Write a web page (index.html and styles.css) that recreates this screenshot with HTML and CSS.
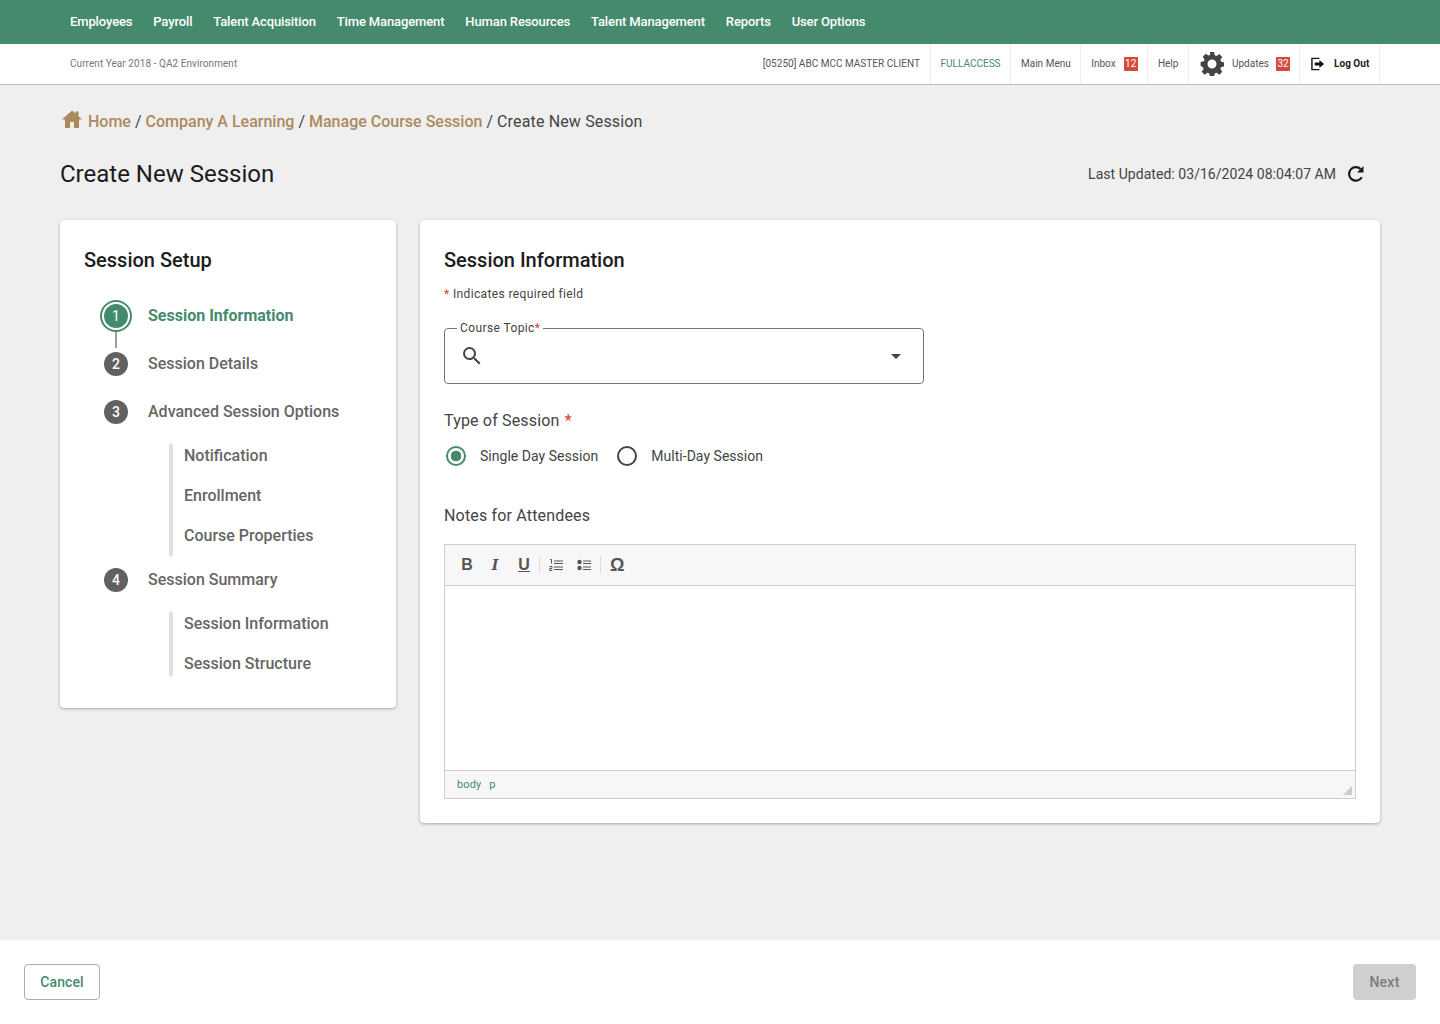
FILE: index.html
```html
<!DOCTYPE html>
<html lang="en">
<head>
<meta charset="utf-8">
<title>Create New Session</title>
<link rel="stylesheet" href="styles.css">
</head>
<body>
<div class="page">
  <nav class="topnav">
    <a>Employees</a><a>Payroll</a><a>Talent Acquisition</a><a>Time Management</a><a>Human Resources</a><a>Talent Management</a><a>Reports</a><a>User Options</a>
  </nav>
  <div class="subbar">
    <span class="env">Current Year 2018 - QA2 Environment</span>
    <div class="subitems">
      <div class="subitem">[05250] ABC MCC MASTER CLIENT</div>
      <div class="subitem green">FULLACCESS</div>
      <div class="subitem">Main Menu</div>
      <div class="subitem">Inbox <span class="badge">12</span></div>
      <div class="subitem help">Help</div>
      <div class="subitem gearitem">
        <svg class="gear" width="24" height="24" viewBox="0 0 24 24"><path fill="#444" fill-rule="evenodd" d="M9.900 0h4.200l.6 3.200 1.900.8 2.700-1.900 3 3-1.900 2.700.8 1.900 3.200.6v4.200l-3.200.6-.8 1.900 1.900 2.700-3 3-2.700-1.900-1.900.8-.6 3.200H9.900l-.6-3.200-1.900-.8-2.700 1.900-3-3 1.900-2.700-.8-1.900L.6 14.100V9.900l3.200-.6.800-1.900-1.900-2.700 3-3 2.700 1.900 1.900-.8zM12 7.500a4.500 4.500 0 1 0 0 9 4.500 4.500 0 0 0 0-9z"/></svg>
        Updates <span class="badge">32</span>
      </div>
      <div class="subitem logout">
        <svg width="14" height="14" viewBox="0 0 15 14"><path fill="none" stroke="#111" stroke-width="1.500" d="M9 1H1v12h8"/><path fill="#111" d="M4 5.500h5V2.800L14 7l-5 4.200V8.500H4z"/></svg>
        Log Out
      </div>
    </div>
  </div>

  <main class="main">
    <div class="crumbs">
      <svg class="home" width="20" height="18" viewBox="0 0 20 18"><path fill="#ab8a5c" d="M10 .5 0 9.500h3V18h5v-6h4v6h5V9.500h3l-3.500-3.200V1.500h-3v2.100z"/></svg>
      <a>Home</a><i>/</i><a>Company A Learning</a><i>/</i><a>Manage Course Session</a><i>/</i><span>Create New Session</span>
    </div>
    <div class="headrow">
      <h1>Create New Session</h1>
      <div class="updated">
        <span>Last Updated: 03/16/2024 08:04:07 AM</span>
        <svg width="20" height="20" viewBox="0 0 20 20"><path fill="none" stroke="#1a1a1a" stroke-width="2.200" d="M15.800 13.200A6.800 6.800 0 1 1 14.600 5"/><path fill="#1a1a1a" d="M17.500 2v6.500H11z"/></svg>
      </div>
    </div>

    <div class="columns">
      <aside class="card setup">
        <h2>Session Setup</h2>
        <ol class="steps">
          <li class="step active"><span class="ring"><span class="num">1</span></span><span class="label">Session Information</span></li>
          <li class="step"><span class="num">2</span><span class="label">Session Details</span></li>
          <li class="step"><span class="num">3</span><span class="label">Advanced Session Options</span></li>
          <li class="subs"><div>Notification</div><div>Enrollment</div><div>Course Properties</div></li>
          <li class="step"><span class="num">4</span><span class="label">Session Summary</span></li>
          <li class="subs"><div>Session Information</div><div>Session Structure</div></li>
        </ol>
      </aside>

      <section class="card info">
        <h2>Session Information</h2>
        <p class="req"><b>*</b> Indicates required field</p>
        <div class="combo">
          <span class="legend">Course Topic<b>*</b></span>
          <svg width="24" height="24" viewBox="0 0 24 24"><path fill="#444" d="M15.500 14h-.79l-.28-.27A6.470 6.470 0 0 0 16 9.500 6.500 6.500 0 1 0 9.500 16c1.610 0 3.090-.59 4.230-1.570l.27.28v.79l5 4.990L20.490 19l-4.990-5zm-6 0C7.010 14 5 11.990 5 9.500S7.010 5 9.500 5 14 7.010 14 9.500 11.990 14 9.500 14z"/></svg>
          <span class="caret"></span>
        </div>
        <div class="fieldlabel type">Type of Session <b>*</b></div>
        <div class="radios">
          <span class="radio on"></span><span class="rlabel">Single Day Session</span>
          <span class="radio"></span><span class="rlabel">Multi-Day Session</span>
        </div>
        <div class="fieldlabel notes">Notes for Attendees</div>
        <div class="editor">
          <div class="toolbar">
            <span class="tool bold">B</span>
            <span class="tool ital">I</span>
            <span class="tool under">U</span>
            <span class="sep"></span>
            <svg class="lst" width="14" height="12" viewBox="0 0 14 12"><path fill="none" stroke="#555" d="M5 2h9M5 4.500h9M5 8h9M5 10.500h9"/><path fill="none" stroke="#555" d="M1 .5h1.500v4M.5 7.500h2.500v2H.8v2h2.500"/></svg>
            <svg class="bul" width="14" height="12" viewBox="0 0 14 12"><circle cx="2.500" cy="3" r="2.200" fill="#555"/><circle cx="2.500" cy="9" r="2.200" fill="#555"/><path fill="none" stroke="#555" d="M6 2h8M6 4.500h8M6 8h8M6 10.500h8"/></svg>
            <span class="sep sep2"></span>
            <span class="tool omega">Ω</span>
          </div>
          <div class="editarea"></div>
          <div class="statusbar"><span>body</span><span>p</span><em class="grip"></em></div>
        </div>
      </section>
    </div>
  </main>

  <footer class="footer">
    <button class="btn cancel">Cancel</button>
    <button class="btn next">Next</button>
  </footer>
</div>
</body>
</html>
```
FILE: styles.css
```css
* { box-sizing: border-box; }
html, body { margin: 0; padding: 0; }
body { font-family: Roboto, "Liberation Sans", sans-serif; background: #efefef; color: #333; }
.page { height: 1024px; display: flex; flex-direction: column; }

.topnav { height: 44px; padding-bottom: 1px; background: #468a6d; display: flex; align-items: center; padding-left: 60px; flex: none; }
.topnav a { color: #fff; font-size: 13px; font-weight: 500; letter-spacing: -.12px; padding: 0 10.450px; }
.topnav a:first-child { padding-left: 10px; }

.subbar { height: 41px; background: #fff; border-bottom: 1px solid #bdbdbd; display: flex; justify-content: space-between; padding: 0 60px 0 70px; flex: none; font-size: 10px; letter-spacing: .02px; color: #555; }
.env { align-self: center; padding-bottom: 1px; color: #777; letter-spacing: .06px; }
.subitems { display: flex; }
.subitem { display: flex; align-items: center; padding: 0 9.700px 1px; border-right: 1px solid #eee; white-space: nowrap; }
.subitem.green { color: #468a6d; }
.badge { background: #d44a3a; color: #fff; border-radius: 1px; width: 14px; height: 14px; display: inline-flex; align-items: center; justify-content: center; margin-left: 8px; font-size: 10px; }
.help { padding: 0 9.500px 1px; }
.gearitem { padding: 0 9px 1px 11px; }
.gearitem .badge { margin-left: 7px; }
.gear { margin-right: 8px; }
.logout { font-weight: 700; color: #222; padding-left: 11px; }
.logout svg { margin-right: 9px; }

.main { flex: 1; padding: 0 60px; }
.crumbs { display: flex; align-items: center; height: 22px; margin: 25px 0 0 2px; font-size: 16px; color: #444; }
.crumbs span { letter-spacing: .15px; }
.crumbs a { color: #ab8a5c; font-weight: 500; letter-spacing: 0; }
.crumbs i { font-style: normal; margin: 0 4px; }
.home { margin: -4px 6px 0 0; }
.headrow { display: flex; justify-content: space-between; align-items: center; height: 30px; margin-top: 27px; }
h1 { margin: 0; font-size: 24px; font-weight: 400; color: #1c1c1c; }
.updated { display: flex; align-items: center; gap: 10px; font-size: 14px; letter-spacing: .04px; margin-right: 14px; color: #444; }

.columns { display: flex; gap: 24px; align-items: flex-start; margin-top: 31px; }
.card { background: #fff; border-radius: 4px; box-shadow: 0 1px 3px rgba(0,0,0,.3); padding: 24px; }
.card h2 { margin: 0; font-size: 20px; line-height: 32px; font-weight: 500; color: #1c1c1c; }
.setup { width: 336px; height: 488px; flex: none; }
.info { flex: 1; height: 603px; }

.steps { list-style: none; margin: 16px 0 0; padding: 0; }
.step { display: flex; align-items: center; height: 48px; padding-left: 20px; position: relative; font-size: 16px; color: #666; font-weight: 500; }
.num { width: 24px; height: 24px; flex: none; border-radius: 50%; background: #616161; color: #fff; font-size: 14px; font-weight: 500; display: flex; align-items: center; justify-content: center; }
.label { margin-left: 20px; padding-bottom: 2px; }
.step.active { color: #468a6d; font-weight: 700; font-size: 16px; }
.ring { width: 32px; height: 32px; margin-left: -4px; margin-right: -4px; flex: none; border-radius: 50%; border: 2px solid #468a6d; display: flex; align-items: center; justify-content: center; position: relative; }
.ring .num { background: #468a6d; font-weight: 400; }
.ring::after { content: ""; position: absolute; left: 13px; top: 30px; width: 2px; height: 16px; background: #9e9e9e; }
.subs { margin: 8px 0 0 85px; padding: 0 0 8px 11px; border-left: 4px solid #e0e0e0; font-size: 16px; color: #666; font-weight: 500; display: flex; flex-direction: column; gap: 16px; }
.subs:last-child { padding-bottom: 0; }
.subs div { height: 24px; line-height: 24px; }

.req { margin: 10px 0 0; font-size: 12px; line-height: 16px; letter-spacing: .37px; color: #444; }
.req b, .legend b, .fieldlabel b { color: #d33c2c; font-weight: 400; }
.combo { position: relative; width: 480px; height: 56px; margin-top: 26px; border: 1px solid #757575; border-radius: 4px; display: flex; align-items: center; padding-left: 15px; }
.legend { position: absolute; left: 12px; top: -9px; padding: 0 3px; background: #fff; font-size: 12px; line-height: 16px; letter-spacing: .4px; color: #444; }
.caret { position: absolute; right: 22px; top: 25px; border: 5px solid transparent; border-top-color: #444; border-bottom: 0; }
.fieldlabel { font-size: 16px; line-height: 24px; letter-spacing: .17px; color: #444; }
.fieldlabel b { margin-left: 1px; }
.type { margin-top: 25px; }
.radios { display: flex; align-items: center; height: 24px; margin-top: 11px; padding-left: 2px; font-size: 14px; letter-spacing: .03px; color: #444; }
.radio { width: 20px; height: 20px; border-radius: 50%; border: 2px solid #444; flex: none; }
.radio.on { border-color: #468a6d; background: radial-gradient(circle, #468a6d 0 5px, #fff 5.500px); }
.rlabel { margin: 0 19px 0 14px; }
.notes { margin-top: 36px; }
.editor { margin-top: 16px; border: 1px solid #ccc; height: 255px; display: flex; flex-direction: column; }
.toolbar { height: 41px; background: #f7f7f7; border-bottom: 1px solid #ccc; display: flex; align-items: center; padding-left: 16px; color: #555; flex: none; }
.tool { font-family: "Liberation Sans", sans-serif; font-size: 16px; font-weight: 700; width: 12px; text-align: center; }
.ital { font-style: italic; margin-left: 16px; font-family: "DejaVu Serif", serif; font-size: 14px; }
.under { text-decoration: underline; margin-left: 17px; }
.sep { width: 1px; height: 18px; background: #ddd; margin: 0 9px; }
.lst { margin-right: 14px; }
.sep2 { margin: 0 9px; }
.omega { font-size: 18px; width: 14px; }
.editarea { flex: 1; background: #fff; }
.statusbar { position: relative; height: 28px; background: #f7f7f7; border-top: 1px solid #ccc; flex: none; display: flex; align-items: center; gap: 8px; padding-left: 12px; font-size: 11px; color: #468a6d; letter-spacing: .1px; }
.grip { position: absolute; right: 3px; bottom: 3px; width: 0; height: 0; border-style: solid; border-width: 0 0 9px 9px; border-color: transparent transparent #ccc transparent; }

.footer { height: 84px; flex: none; background: #fff; display: flex; justify-content: space-between; align-items: center; padding: 0 24px; }
.btn { height: 36px; border-radius: 4px; font-family: Roboto, sans-serif; font-size: 14px; font-weight: 500; letter-spacing: .1px; padding: 0; }
.cancel { width: 76px; background: #fff; color: #468a6d; border: 1px solid #9db5ab; }
.next { width: 63px; background: #cfcfcf; color: #7c7c7c; border: 0; letter-spacing: .25px; }
```
